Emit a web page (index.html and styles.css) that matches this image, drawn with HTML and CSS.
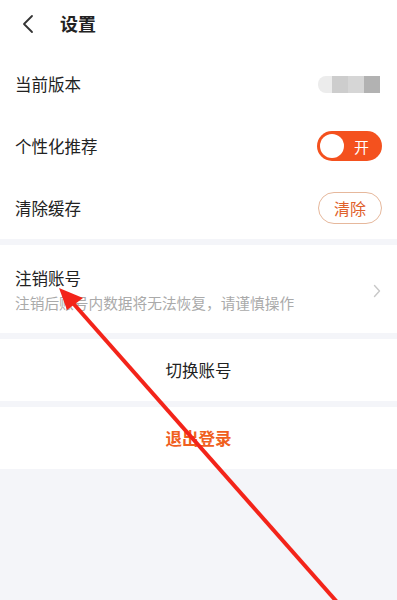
FILE: index.html
```html
<!DOCTYPE html>
<html lang="zh-CN">

<head>
    <meta charset="UTF-8">
    <meta name="viewport" content="width=device-width, initial-scale=1.0">
    <title>设置</title>
    <link rel="stylesheet" href="styles.css">
</head>

<body>
    <div class="page">
        <div class="header">
            <svg class="back" width="14" height="20" viewBox="0 0 14 20">
                <path d="M11 2 L3 10 L11 18" fill="none" stroke="#333" stroke-width="1.8" stroke-linecap="round" stroke-linejoin="round"/>
            </svg>
            <h1>设置</h1>
        </div>

        <div class="group">
            <div class="row">
                <span class="label">当前版本</span>
                <span class="version">
                    <i class="v1"></i><i class="v2"></i><i class="v3"></i><i class="v4"></i>
                </span>
            </div>
            <div class="row">
                <span class="label">个性化推荐</span>
                <span class="switch"><i class="knob"></i><span class="switch-text">开</span></span>
            </div>
            <div class="row">
                <span class="label">清除缓存</span>
                <span class="clear-btn">清除</span>
            </div>
        </div>

        <div class="group">
            <div class="row row-tall">
                <div class="cancel-text">
                    <span class="label">注销账号</span>
                    <span class="sub">注销后账号内数据将无法恢复，请谨慎操作</span>
                </div>
                <svg class="arrow-right" width="8" height="14" viewBox="0 0 8 14">
                    <path d="M1.5 1.5 L6.5 7 L1.5 12.5" fill="none" stroke="#c8c8c8" stroke-width="1.4" stroke-linecap="round" stroke-linejoin="round"/>
                </svg>
            </div>
        </div>

        <div class="group">
            <div class="row row-center">切换账号</div>
        </div>

        <div class="group">
            <div class="row row-center logout">退出登录</div>
        </div>
    </div>

    <!-- red annotation arrow on top of the screenshot -->
    <svg class="mark" width="397" height="600" viewBox="0 0 397 600">
        <line x1="72" y1="302" x2="337" y2="602" stroke="#f3241a" stroke-width="4"/>
        <polygon points="59,288 83,298 67,310" fill="#f3241a"/>
    </svg>
</body>

</html>
```

FILE: styles.css
```css
body {
    margin: 0;
    padding: 0;
    font-family: "Noto Sans CJK SC", "Noto Sans", sans-serif;
    background-color: #f4f5f9;
    color: #222;
}

.page {
    width: 397px;
    min-height: 600px;
    background-color: #f4f5f9;
}

.header {
    height: 53px;
    background-color: #ffffff;
    display: flex;
    align-items: center;
    padding-left: 21px;
}

.header .back {
    margin-right: 25px;
    margin-top: -6px;
}

.header h1 {
    margin: 0;
    font-size: 18px;
    font-weight: bold;
    color: #222;
    margin-top: -8px;
}

.group {
    background-color: #ffffff;
    margin-bottom: 6px;
}

.row {
    height: 62px;
    display: flex;
    align-items: center;
    justify-content: space-between;
    padding: 0 15px;
}

.label {
    font-size: 16.5px;
    color: #222;
}

.version {
    display: flex;
    height: 17px;
    margin-right: 2px;
}

.version i {
    display: block;
    height: 17px;
}

.v1 {
    width: 14px;
    background-color: #ececec;
    border-radius: 8px 0 0 8px;
}

.v2 {
    width: 16px;
    background-color: #cdcdcd;
}

.v3 {
    width: 16px;
    background-color: #d6d6d6;
}

.v4 {
    width: 16px;
    background-color: #b2b2b2;
}

.switch {
    width: 65px;
    height: 30px;
    border-radius: 15px;
    background-color: #f4511e;
    display: flex;
    align-items: center;
    justify-content: space-between;
    padding: 0 3px;
    box-sizing: border-box;
}

.knob {
    display: block;
    width: 24px;
    height: 24px;
    border-radius: 50%;
    background-color: #ffffff;
}

.switch-text {
    color: #ffffff;
    font-size: 15px;
    margin-right: 10px;
}

.clear-btn {
    width: 64px;
    height: 32px;
    box-sizing: border-box;
    border: 1px solid #e6b89c;
    border-radius: 16px;
    color: #e0612c;
    font-size: 16px;
    display: flex;
    align-items: center;
    justify-content: center;
}

.row-tall {
    height: 88px;
}

.cancel-text {
    display: flex;
    flex-direction: column;
}

.cancel-text .label {
    line-height: 22px;
    margin-top: 2px;
}

.sub {
    font-size: 14.7px;
    color: #aaaaaa;
    margin-top: 3px;
}

.arrow-right {
    margin-right: 1px;
    margin-top: 4px;
}

.row-center {
    justify-content: center;
    font-size: 16.5px;
    color: #222;
}

.logout {
    color: #f0601e;
    font-weight: bold;
}

.mark {
    position: absolute;
    left: 0;
    top: 0;
    pointer-events: none;
}
```
